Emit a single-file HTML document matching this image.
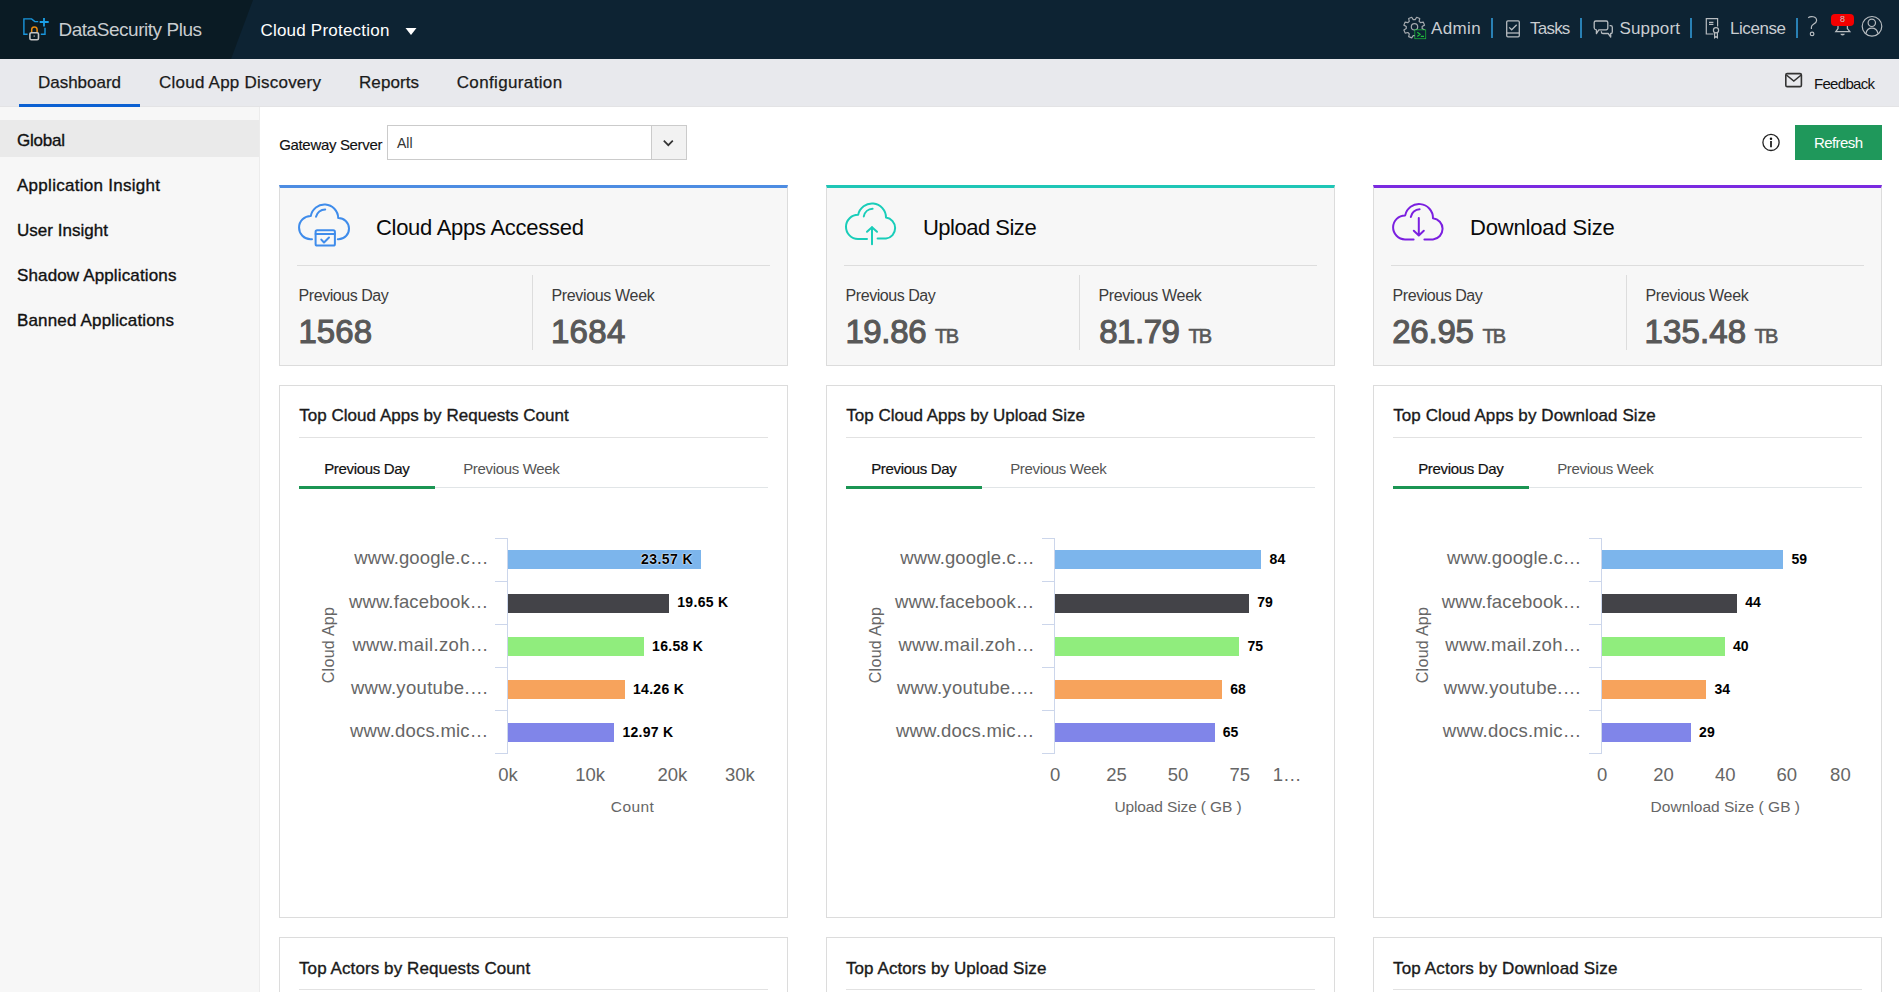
<!DOCTYPE html>
<html><head><meta charset="utf-8"><title>DataSecurity Plus - Cloud Protection</title>
<style>
html,body{margin:0;padding:0;}
body{width:1899px;height:992px;overflow:hidden;position:relative;background:#fff;font-family:"Liberation Sans", sans-serif;}
.a{position:absolute;}
.t{position:absolute;white-space:pre;}
svg{position:absolute;overflow:visible;}
</style></head><body>
<div class='a' style='left:0;top:0;width:1899px;height:59px;background:#0d2333'></div><svg style='left:0;top:0' width='260' height='59'><polygon points='0,0 253,0 231,59 0,59' fill='#0a1b24'/></svg><svg style='left:0;top:0' width='60' height='50' fill='none'>
<path d='M27.6,34.2 H23.9 V18.9 H31.6 L34.8,21.6 H38.2' stroke='#1996dc' stroke-width='1.4'/>
<path d='M40.8,34.2 H45 V27.8' stroke='#1996dc' stroke-width='1.4'/>
<path d='M44,18 V26.6 M39.7,22 H48.7' stroke='#1b9fe6' stroke-width='1.8'/>
<path d='M31.7,33 V29.6 A2.7,2.7 0 0 1 37.1,29.6 V33' stroke='#e98a10' stroke-width='1.5'/>
<rect x='29.9' y='32.7' width='8.6' height='7' rx='1.4' stroke='#c4c4c4' stroke-width='1.6' fill='#0a1b24'/>
<rect x='33.6' y='35.2' width='1.2' height='1.8' fill='#888'/>
</svg><svg style='left:0;top:0' width='1' height='1'><polygon points='405.5,28 416.5,28 411,35' fill='#fff'/></svg><svg style='left:0;top:0' width='1' height='1' fill='none' stroke='#a4a9ae' stroke-width='1.2'><polygon points='1415.20,19.66 1416.67,17.29 1419.74,18.56 1419.10,21.28 1420.52,22.70 1420.52,22.70 1423.24,22.06 1424.51,25.13 1422.14,26.60 1422.14,28.60 1422.14,28.60 1424.51,30.07 1423.24,33.14 1420.52,32.50 1419.10,33.92 1419.10,33.92 1419.74,36.64 1416.67,37.91 1415.20,35.54 1413.20,35.54 1413.20,35.54 1411.73,37.91 1408.66,36.64 1409.30,33.92 1407.88,32.50 1407.88,32.50 1405.16,33.14 1403.89,30.07 1406.26,28.60 1406.26,26.60 1406.26,26.60 1403.89,25.13 1405.16,22.06 1407.88,22.70 1409.30,21.28 1409.30,21.28 1408.66,18.56 1411.73,17.29 1413.20,19.66 1415.20,19.66' stroke-linejoin='round'/><circle cx='1414.5' cy='26.8' r='3.2'/></svg><svg style='left:0;top:0' width='1' height='1' fill='none'>
<rect x='1415.2' y='30.2' width='10.2' height='8.2' stroke='#1fc23a' stroke-width='1.4' fill='#0d2333' style='paint-order:stroke'/>
<path d='M1417.3,32.2 L1420.1,34.3 L1417.3,36.4 M1420.8,36.3 H1424' stroke='#1fc23a' stroke-width='1.2'/>
</svg><div class='a' style='left:1491px;top:18px;width:2px;height:20px;background:#2981b5'></div><div class='a' style='left:1580px;top:18px;width:2px;height:20px;background:#2981b5'></div><div class='a' style='left:1690px;top:18px;width:2px;height:20px;background:#2981b5'></div><div class='a' style='left:1796px;top:18px;width:2px;height:20px;background:#2981b5'></div><svg style='left:0;top:0' width='1' height='1' fill='none' stroke='#b7bcc0' stroke-width='1.3'>
<rect x='1506.7' y='20.9' width='12.6' height='15.9' rx='1.2'/>
<path d='M1506.7,33 H1519.3'/>
<path d='M1509.2,27.4 l2.5,2.4 5,-5' />
</svg><svg style='left:0;top:0' width='1' height='1' fill='none' stroke='#b7bcc0' stroke-width='1.3' stroke-linejoin='round'>
<path d='M1595.8,21 H1606.2 A1.6,1.6 0 0 1 1607.8,22.6 V28.2 A1.6,1.6 0 0 1 1606.2,29.8 H1598.8 L1596.4,33.6 V29.8 A2.2,2.2 0 0 1 1594.2,28 V22.6 A1.6,1.6 0 0 1 1595.8,21 Z'/>
<path d='M1609.6,25.6 H1610.7 A1.6,1.6 0 0 1 1612.3,27.2 V31.9 A1.6,1.6 0 0 1 1610.7,33.5 V37 L1608.2,33.5 H1603 A1.6,1.6 0 0 1 1601.4,31.9 V31.2'/>
</svg><svg style='left:0;top:0' width='1' height='1' fill='none' stroke='#b7bcc0' stroke-width='1.2'>
<path d='M1713.5,34 H1706.3 V18.6 H1717.6 V26.6'/>
<path d='M1709,22.4 h4.4 M1709,24.4 h4.4'/>
<circle cx='1716' cy='30.2' r='2.6'/>
<path d='M1714.6,33 v4.8 l1.4,-1.2 1.4,1.2 v-4.8'/>
</svg><svg style='left:0;top:0' width='1' height='1' fill='none' stroke='#b7bcc0' stroke-width='1.2'>
<path d='M1808.2,17.8 C1810.5,15.8 1816.6,16.2 1816.6,20.4 C1816.6,23.6 1811.4,24.4 1811.4,27 V29'/>
<circle cx='1812.1' cy='33.9' r='1.8'/>
</svg><svg style='left:0;top:0' width='1' height='1' fill='none' stroke='#b7bcc0' stroke-width='1.3'>
<path d='M1838,25.5 V28.6 L1835.8,31.6 H1849.8 L1847.4,28.6 V25.5'/>
<path d='M1840.4,33.8 h4.4 a2.2,1.8 0 0 1 -4.4,0z' fill='#b7bcc0' stroke='none'/>
</svg><div class='a' style='left:1831px;top:14px;width:23px;height:12px;background:#f50000;border-radius:4px'></div><svg style='left:0;top:0' width='1' height='1' fill='none' stroke='#b7bcc0' stroke-width='1.2'>
<circle cx='1872' cy='26.3' r='9.8'/>
<circle cx='1871.8' cy='22.8' r='3.7'/>
<path d='M1866,33.4 C1866.6,29.6 1868.6,28.2 1871.9,28.2 C1875.2,28.2 1877.2,29.6 1877.9,33.4'/>
</svg><div class='a' style='left:0;top:59px;width:1899px;height:47px;background:#e8e9ed'></div><div class='a' style='left:0;top:106px;width:1899px;height:1px;background:#e3e3e5'></div><div class='a' style='left:19px;top:104px;width:121px;height:3px;background:#0b60d2'></div><svg style='left:0;top:0' width='1' height='1' fill='none' stroke='#333' stroke-width='1.6'>
<rect x='1785.8' y='73.6' width='15.6' height='13' rx='1.4'/>
<path d='M1786.4,75 l7.4,6 7.4,-6'/>
</svg><div class='a' style='left:0;top:107px;width:259px;height:885px;background:#f7f7f7'></div><div class='a' style='left:0;top:120px;width:259px;height:37px;background:#eaeaea'></div><div class='a' style='left:259px;top:107px;width:1px;height:885px;background:#ececec'></div><div class='a' style='left:387px;top:125px;width:300px;height:35px;box-sizing:border-box;border:1px solid #cbcbcb;background:#fff'></div><div class='a' style='left:651px;top:126px;width:35px;height:33px;box-sizing:border-box;border-left:1px solid #cbcbcb;background:#f2f2f2'></div><svg style='left:0;top:0' width='1' height='1' fill='none'><polyline points='663.8,140.6 668.3,145.2 672.8,140.6' stroke='#333' stroke-width='1.7'/></svg><svg style='left:0;top:0' width='1' height='1' fill='none' stroke='#222' stroke-width='1.3'>
<circle cx='1771' cy='142.4' r='8.1'/>
<path d='M1771,141 V147.2' stroke-width='1.8'/>
<circle cx='1771' cy='138.8' r='1.25' fill='#111' stroke='none'/>
</svg><div class='a' style='left:1795px;top:125px;width:87px;height:35px;background:#1f985b'></div><div class='a' style='left:279px;top:185px;width:509px;height:181px;box-sizing:border-box;background:#f7f7f7;border:1px solid #dcdcdc;border-top:3px solid #4d8ce2'></div><svg style='left:290px;top:195px' width='70' height='60' fill='none' stroke='#3f8ceb' stroke-width='2' stroke-linecap='round' stroke-linejoin='round'><path d='M22,44.2 H20.5 A11.6,11.6 0 0 1 20.8,21 A13.8,13.8 0 0 1 48.2,23 A10.6,10.6 0 0 1 48.6,44.2 H47.8'/><path d='M26,21.8 A9.4,9.4 0 0 1 35.2,14.5'/><rect x='25.6' y='35.2' width='19.3' height='15.4' rx='1.6'/><path d='M25.6,39 H44.9'/><path d='M31.3,44.6 l2.7,2.9 5,-5'/></svg><div class='a' style='left:297px;top:265px;width:473px;height:1px;background:#dddddd'></div><div class='a' style='left:532px;top:275px;width:1px;height:75px;background:#dddddd'></div><div class='a' style='left:826px;top:185px;width:509px;height:181px;box-sizing:border-box;background:#f7f7f7;border:1px solid #dcdcdc;border-top:3px solid #1fc6b6'></div><svg style='left:837px;top:195px' width='70' height='60' fill='none' stroke='#19cdb9' stroke-width='2' stroke-linecap='round' stroke-linejoin='round'><path d='M30,44 H21 A11.6,11.6 0 0 1 21.2,19.8 A14.03,14.03 0 0 1 49,22.6 A10.6,10.6 0 0 1 49,43.6 H40.6'/><path d='M26.8,21.4 A9.4,9.4 0 0 1 35.6,13.8'/><path d='M35,49.2 V32 M30,36.8 L35,32.2 40,36.8'/></svg><div class='a' style='left:844px;top:265px;width:473px;height:1px;background:#dddddd'></div><div class='a' style='left:1079px;top:275px;width:1px;height:75px;background:#dddddd'></div><div class='a' style='left:1373px;top:185px;width:509px;height:181px;box-sizing:border-box;background:#f7f7f7;border:1px solid #dcdcdc;border-top:3px solid #7a2ae0'></div><svg style='left:1384px;top:195px' width='70' height='60' fill='none' stroke='#7b1fe0' stroke-width='2' stroke-linecap='round' stroke-linejoin='round'><path d='M29.6,44.4 H21 A11.6,11.6 0 0 1 21.2,20.4 A14.03,14.03 0 0 1 49,23.3 A10.6,10.6 0 0 1 49,44.4 H40.4'/><path d='M26.8,22 A9.4,9.4 0 0 1 35.6,14.3'/><path d='M34.8,23 V40.2 M29.8,35.8 L34.8,40.4 39.8,35.8'/></svg><div class='a' style='left:1391px;top:265px;width:473px;height:1px;background:#dddddd'></div><div class='a' style='left:1626px;top:275px;width:1px;height:75px;background:#dddddd'></div><div class='a' style='left:279px;top:385px;width:509px;height:533px;box-sizing:border-box;background:#fff;border:1px solid #dcdcdc'></div><div class='a' style='left:299px;top:437px;width:469px;height:1px;background:#e2e2e2'></div><div class='a' style='left:299px;top:487px;width:469px;height:1px;background:#e1e5e7'></div><div class='a' style='left:299px;top:486px;width:136px;height:3px;background:#1b9553'></div><div class='a' style='left:507px;top:538px;width:1px;height:216px;background:#ccd6eb'></div><div class='a' style='left:495px;top:538px;width:12px;height:1px;background:#ccd6eb'></div><div class='a' style='left:495px;top:581px;width:12px;height:1px;background:#ccd6eb'></div><div class='a' style='left:495px;top:624px;width:12px;height:1px;background:#ccd6eb'></div><div class='a' style='left:495px;top:667px;width:12px;height:1px;background:#ccd6eb'></div><div class='a' style='left:495px;top:710px;width:12px;height:1px;background:#ccd6eb'></div><div class='a' style='left:495px;top:753px;width:12px;height:1px;background:#ccd6eb'></div><div class='a' style='left:508px;top:550px;width:193.2px;height:19.4px;background:#7cb5ec'></div><div class='a' style='left:508px;top:593.5px;width:161.0px;height:19.4px;background:#434348'></div><div class='a' style='left:508px;top:636.8px;width:135.8px;height:19.4px;background:#90ed7d'></div><div class='a' style='left:508px;top:680px;width:116.7px;height:19.4px;background:#f7a35c'></div><div class='a' style='left:508px;top:722.6px;width:106.1px;height:19.4px;background:#8085e9'></div><div class='t' style='left:289.3px;top:637.3px;width:80px;height:16px;line-height:16px;text-align:center;font-size:16px;color:#666;transform:rotate(-90deg);letter-spacing:0.3px'>Cloud App</div><div class='a' style='left:826px;top:385px;width:509px;height:533px;box-sizing:border-box;background:#fff;border:1px solid #dcdcdc'></div><div class='a' style='left:846px;top:437px;width:469px;height:1px;background:#e2e2e2'></div><div class='a' style='left:846px;top:487px;width:469px;height:1px;background:#e1e5e7'></div><div class='a' style='left:846px;top:486px;width:136px;height:3px;background:#1b9553'></div><div class='a' style='left:1054px;top:538px;width:1px;height:216px;background:#ccd6eb'></div><div class='a' style='left:1042px;top:538px;width:12px;height:1px;background:#ccd6eb'></div><div class='a' style='left:1042px;top:581px;width:12px;height:1px;background:#ccd6eb'></div><div class='a' style='left:1042px;top:624px;width:12px;height:1px;background:#ccd6eb'></div><div class='a' style='left:1042px;top:667px;width:12px;height:1px;background:#ccd6eb'></div><div class='a' style='left:1042px;top:710px;width:12px;height:1px;background:#ccd6eb'></div><div class='a' style='left:1042px;top:753px;width:12px;height:1px;background:#ccd6eb'></div><div class='a' style='left:1055px;top:550px;width:206.3px;height:19.4px;background:#7cb5ec'></div><div class='a' style='left:1055px;top:593.5px;width:194.0px;height:19.4px;background:#434348'></div><div class='a' style='left:1055px;top:636.8px;width:184.2px;height:19.4px;background:#90ed7d'></div><div class='a' style='left:1055px;top:680px;width:166.9px;height:19.4px;background:#f7a35c'></div><div class='a' style='left:1055px;top:722.6px;width:159.5px;height:19.4px;background:#8085e9'></div><div class='t' style='left:836.3px;top:637.3px;width:80px;height:16px;line-height:16px;text-align:center;font-size:16px;color:#666;transform:rotate(-90deg);letter-spacing:0.3px'>Cloud App</div><div class='a' style='left:1373px;top:385px;width:509px;height:533px;box-sizing:border-box;background:#fff;border:1px solid #dcdcdc'></div><div class='a' style='left:1393px;top:437px;width:469px;height:1px;background:#e2e2e2'></div><div class='a' style='left:1393px;top:487px;width:469px;height:1px;background:#e1e5e7'></div><div class='a' style='left:1393px;top:486px;width:136px;height:3px;background:#1b9553'></div><div class='a' style='left:1601px;top:538px;width:1px;height:216px;background:#ccd6eb'></div><div class='a' style='left:1589px;top:538px;width:12px;height:1px;background:#ccd6eb'></div><div class='a' style='left:1589px;top:581px;width:12px;height:1px;background:#ccd6eb'></div><div class='a' style='left:1589px;top:624px;width:12px;height:1px;background:#ccd6eb'></div><div class='a' style='left:1589px;top:667px;width:12px;height:1px;background:#ccd6eb'></div><div class='a' style='left:1589px;top:710px;width:12px;height:1px;background:#ccd6eb'></div><div class='a' style='left:1589px;top:753px;width:12px;height:1px;background:#ccd6eb'></div><div class='a' style='left:1602px;top:550px;width:181.2px;height:19.4px;background:#7cb5ec'></div><div class='a' style='left:1602px;top:593.5px;width:135.0px;height:19.4px;background:#434348'></div><div class='a' style='left:1602px;top:636.8px;width:122.7px;height:19.4px;background:#90ed7d'></div><div class='a' style='left:1602px;top:680px;width:104.2px;height:19.4px;background:#f7a35c'></div><div class='a' style='left:1602px;top:722.6px;width:88.8px;height:19.4px;background:#8085e9'></div><div class='t' style='left:1383.3px;top:637.3px;width:80px;height:16px;line-height:16px;text-align:center;font-size:16px;color:#666;transform:rotate(-90deg);letter-spacing:0.3px'>Cloud App</div><div class='a' style='left:279px;top:937px;width:509px;height:80px;box-sizing:border-box;background:#fff;border:1px solid #dcdcdc'></div><div class='a' style='left:299px;top:989px;width:469px;height:1px;background:#e2e2e2'></div><div class='a' style='left:826px;top:937px;width:509px;height:80px;box-sizing:border-box;background:#fff;border:1px solid #dcdcdc'></div><div class='a' style='left:846px;top:989px;width:469px;height:1px;background:#e2e2e2'></div><div class='a' style='left:1373px;top:937px;width:509px;height:80px;box-sizing:border-box;background:#fff;border:1px solid #dcdcdc'></div><div class='a' style='left:1393px;top:989px;width:469px;height:1px;background:#e2e2e2'></div>
<div class='t' style='left:58.4px;top:20.0px;font-size:19px;line-height:19px;color:#c9cdd0;letter-spacing:-0.46px;'>DataSecurity Plus</div><div class='t' style='left:260.4px;top:22.0px;font-size:17px;line-height:17px;color:#ffffff;letter-spacing:0.22px;'>Cloud Protection</div><div class='t' style='left:1431.0px;top:20.0px;font-size:17px;line-height:17px;color:#c9cdd1;letter-spacing:0.38px;'>Admin</div><div class='t' style='left:1530.0px;top:20.0px;font-size:17px;line-height:17px;color:#c9cdd1;letter-spacing:-0.77px;'>Tasks</div><div class='t' style='left:1619.5px;top:20.0px;font-size:17px;line-height:17px;color:#c9cdd1;letter-spacing:0.16px;'>Support</div><div class='t' style='left:1730.0px;top:20.0px;font-size:17px;line-height:17px;color:#c9cdd1;letter-spacing:-0.43px;'>License</div><div class='t' style='left:1840.1px;top:15.0px;font-size:9px;line-height:9px;color:#c8c8c8;'>8</div><div class='t' style='left:38.0px;top:74.0px;font-size:17px;line-height:17px;color:#1b1b1b;letter-spacing:-0.02px;-webkit-text-stroke:0.25px currentColor;'>Dashboard</div><div class='t' style='left:159.0px;top:74.0px;font-size:17px;line-height:17px;color:#1b1b1b;letter-spacing:0.23px;-webkit-text-stroke:0.25px currentColor;'>Cloud App Discovery</div><div class='t' style='left:359.0px;top:74.0px;font-size:17px;line-height:17px;color:#1b1b1b;letter-spacing:0.08px;-webkit-text-stroke:0.25px currentColor;'>Reports</div><div class='t' style='left:456.7px;top:74.0px;font-size:17px;line-height:17px;color:#1b1b1b;letter-spacing:0.36px;-webkit-text-stroke:0.25px currentColor;'>Configuration</div><div class='t' style='left:1814.0px;top:76.0px;font-size:15px;line-height:15px;color:#111;letter-spacing:-0.70px;'>Feedback</div><div class='t' style='left:17.0px;top:132.0px;font-size:17px;line-height:17px;color:#111;letter-spacing:-0.23px;-webkit-text-stroke:0.35px currentColor;'>Global</div><div class='t' style='left:17.0px;top:177.0px;font-size:17px;line-height:17px;color:#111;letter-spacing:0.28px;-webkit-text-stroke:0.35px currentColor;'>Application Insight</div><div class='t' style='left:17.0px;top:221.5px;font-size:17px;line-height:17px;color:#111;letter-spacing:0.03px;-webkit-text-stroke:0.35px currentColor;'>User Insight</div><div class='t' style='left:17.0px;top:267.0px;font-size:17px;line-height:17px;color:#111;letter-spacing:0.14px;-webkit-text-stroke:0.35px currentColor;'>Shadow Applications</div><div class='t' style='left:17.0px;top:312.0px;font-size:17px;line-height:17px;color:#111;letter-spacing:0.16px;-webkit-text-stroke:0.35px currentColor;'>Banned Applications</div><div class='t' style='left:279.2px;top:137.0px;font-size:15px;line-height:15px;color:#111;letter-spacing:-0.33px;-webkit-text-stroke:0.15px currentColor;'>Gateway Server</div><div class='t' style='left:397.0px;top:136.0px;font-size:14px;line-height:14px;color:#333;'>All</div><div class='t' style='left:1814.0px;top:135.0px;font-size:15px;line-height:15px;color:#fff;letter-spacing:-0.59px;'>Refresh</div><div class='t' style='left:375.9px;top:217.0px;font-size:22px;line-height:22px;color:#0a0a0a;letter-spacing:-0.26px;'>Cloud Apps Accessed</div><div class='t' style='left:298.6px;top:288.0px;font-size:16px;line-height:16px;color:#3c3c3c;letter-spacing:-0.45px;'>Previous Day</div><div class='t' style='left:551.4px;top:288.0px;font-size:16px;line-height:16px;color:#3c3c3c;letter-spacing:-0.33px;'>Previous Week</div><div class='t' style='left:298.4px;top:315.0px;font-size:33px;line-height:33px;color:#585858;letter-spacing:0.13px;-webkit-text-stroke:1.1px currentColor;'>1568</div><div class='t' style='left:550.9px;top:315.0px;font-size:33px;line-height:33px;color:#585858;letter-spacing:0.36px;-webkit-text-stroke:1.1px currentColor;'>1684</div><div class='t' style='left:922.9px;top:217.0px;font-size:22px;line-height:22px;color:#0a0a0a;letter-spacing:-0.49px;'>Upload Size</div><div class='t' style='left:845.6px;top:288.0px;font-size:16px;line-height:16px;color:#3c3c3c;letter-spacing:-0.45px;'>Previous Day</div><div class='t' style='left:1098.4px;top:288.0px;font-size:16px;line-height:16px;color:#3c3c3c;letter-spacing:-0.33px;'>Previous Week</div><div class='t' style='left:845.4px;top:315.0px;font-size:33px;line-height:33px;color:#585858;letter-spacing:-0.37px;-webkit-text-stroke:1.1px currentColor;'>19.86</div><div class='t' style='left:935.0px;top:326.0px;font-size:20px;line-height:20px;color:#585858;letter-spacing:-1.36px;-webkit-text-stroke:0.6px currentColor;'>TB</div><div class='t' style='left:1099.2px;top:315.0px;font-size:33px;line-height:33px;color:#585858;letter-spacing:-0.47px;-webkit-text-stroke:1.1px currentColor;'>81.79</div><div class='t' style='left:1188.4px;top:326.0px;font-size:20px;line-height:20px;color:#585858;letter-spacing:-1.76px;-webkit-text-stroke:0.6px currentColor;'>TB</div><div class='t' style='left:1469.9px;top:217.0px;font-size:22px;line-height:22px;color:#0a0a0a;letter-spacing:-0.15px;'>Download Size</div><div class='t' style='left:1392.6px;top:288.0px;font-size:16px;line-height:16px;color:#3c3c3c;letter-spacing:-0.45px;'>Previous Day</div><div class='t' style='left:1645.4px;top:288.0px;font-size:16px;line-height:16px;color:#3c3c3c;letter-spacing:-0.33px;'>Previous Week</div><div class='t' style='left:1392.2px;top:315.0px;font-size:33px;line-height:33px;color:#585858;letter-spacing:-0.22px;-webkit-text-stroke:1.1px currentColor;'>26.95</div><div class='t' style='left:1482.4px;top:326.0px;font-size:20px;line-height:20px;color:#585858;letter-spacing:-1.76px;-webkit-text-stroke:0.6px currentColor;'>TB</div><div class='t' style='left:1644.5px;top:315.0px;font-size:33px;line-height:33px;color:#585858;letter-spacing:0.11px;-webkit-text-stroke:1.1px currentColor;'>135.48</div><div class='t' style='left:1754.5px;top:326.0px;font-size:20px;line-height:20px;color:#585858;letter-spacing:-1.76px;-webkit-text-stroke:0.6px currentColor;'>TB</div><div class='t' style='left:299.2px;top:407.0px;font-size:17px;line-height:17px;color:#1a1a1a;letter-spacing:0.04px;-webkit-text-stroke:0.35px currentColor;'>Top Cloud Apps by Requests Count</div><div class='t' style='left:324.2px;top:461.0px;font-size:15px;line-height:15px;color:#111;letter-spacing:-0.32px;-webkit-text-stroke:0.2px currentColor;'>Previous Day</div><div class='t' style='left:463.2px;top:461.0px;font-size:15px;line-height:15px;color:#555;letter-spacing:-0.33px;'>Previous Week</div><div class='t' style='left:640.9px;top:551.9px;font-size:14px;line-height:14px;color:#000;font-weight:700;letter-spacing:0.46px;text-shadow:0 0 2px #fff,0 0 1px #fff;'>23.57 K</div><div class='t' style='left:354.2px;top:549.3px;font-size:18.5px;line-height:18.5px;color:#666;letter-spacing:0.13px;'>www.google.c…</div><div class='t' style='left:677.3px;top:595.4px;font-size:14px;line-height:14px;color:#000;font-weight:700;letter-spacing:0.29px;text-shadow:0 0 2px #fff,0 0 1px #fff;'>19.65 K</div><div class='t' style='left:348.9px;top:592.8px;font-size:18.5px;line-height:18.5px;color:#666;letter-spacing:0.14px;'>www.facebook…</div><div class='t' style='left:652.1px;top:638.7px;font-size:14px;line-height:14px;color:#000;font-weight:700;letter-spacing:0.29px;text-shadow:0 0 2px #fff,0 0 1px #fff;'>16.58 K</div><div class='t' style='left:352.4px;top:636.1px;font-size:18.5px;line-height:18.5px;color:#666;letter-spacing:0.37px;'>www.mail.zoh…</div><div class='t' style='left:633.0px;top:681.9px;font-size:14px;line-height:14px;color:#000;font-weight:700;letter-spacing:0.29px;text-shadow:0 0 2px #fff,0 0 1px #fff;'>14.26 K</div><div class='t' style='left:350.9px;top:679.3px;font-size:18.5px;line-height:18.5px;color:#666;letter-spacing:0.32px;'>www.youtube.…</div><div class='t' style='left:622.4px;top:724.5px;font-size:14px;line-height:14px;color:#000;font-weight:700;letter-spacing:0.29px;text-shadow:0 0 2px #fff,0 0 1px #fff;'>12.97 K</div><div class='t' style='left:349.9px;top:721.9px;font-size:18.5px;line-height:18.5px;color:#666;letter-spacing:0.23px;'>www.docs.mic…</div><div class='t' style='left:498.2px;top:766.0px;font-size:18.5px;line-height:18.5px;color:#666;'>0k</div><div class='t' style='left:575.3px;top:766.0px;font-size:18.5px;line-height:18.5px;color:#666;'>10k</div><div class='t' style='left:657.5px;top:766.0px;font-size:18.5px;line-height:18.5px;color:#666;'>20k</div><div class='t' style='left:724.9px;top:766.0px;font-size:18.5px;line-height:18.5px;color:#666;'>30k</div><div class='t' style='left:610.8px;top:799.0px;font-size:15.5px;line-height:15.5px;color:#666;letter-spacing:0.41px;'>Count</div><div class='t' style='left:846.2px;top:407.0px;font-size:17px;line-height:17px;color:#1a1a1a;letter-spacing:0.02px;-webkit-text-stroke:0.35px currentColor;'>Top Cloud Apps by Upload Size</div><div class='t' style='left:871.2px;top:461.0px;font-size:15px;line-height:15px;color:#111;letter-spacing:-0.32px;-webkit-text-stroke:0.2px currentColor;'>Previous Day</div><div class='t' style='left:1010.2px;top:461.0px;font-size:15px;line-height:15px;color:#555;letter-spacing:-0.33px;'>Previous Week</div><div class='t' style='left:1269.6px;top:551.9px;font-size:14px;line-height:14px;color:#000;font-weight:700;letter-spacing:0.02px;text-shadow:0 0 2px #fff,0 0 1px #fff;'>84</div><div class='t' style='left:900.2px;top:549.3px;font-size:18.5px;line-height:18.5px;color:#666;letter-spacing:0.13px;'>www.google.c…</div><div class='t' style='left:1257.3px;top:595.4px;font-size:14px;line-height:14px;color:#000;font-weight:700;letter-spacing:0.02px;text-shadow:0 0 2px #fff,0 0 1px #fff;'>79</div><div class='t' style='left:894.9px;top:592.8px;font-size:18.5px;line-height:18.5px;color:#666;letter-spacing:0.14px;'>www.facebook…</div><div class='t' style='left:1247.5px;top:638.7px;font-size:14px;line-height:14px;color:#000;font-weight:700;letter-spacing:0.02px;text-shadow:0 0 2px #fff,0 0 1px #fff;'>75</div><div class='t' style='left:898.4px;top:636.1px;font-size:18.5px;line-height:18.5px;color:#666;letter-spacing:0.37px;'>www.mail.zoh…</div><div class='t' style='left:1230.2px;top:681.9px;font-size:14px;line-height:14px;color:#000;font-weight:700;letter-spacing:0.02px;text-shadow:0 0 2px #fff,0 0 1px #fff;'>68</div><div class='t' style='left:896.9px;top:679.3px;font-size:18.5px;line-height:18.5px;color:#666;letter-spacing:0.32px;'>www.youtube.…</div><div class='t' style='left:1222.8px;top:724.5px;font-size:14px;line-height:14px;color:#000;font-weight:700;letter-spacing:0.02px;text-shadow:0 0 2px #fff,0 0 1px #fff;'>65</div><div class='t' style='left:895.9px;top:721.9px;font-size:18.5px;line-height:18.5px;color:#666;letter-spacing:0.23px;'>www.docs.mic…</div><div class='t' style='left:1049.9px;top:766.0px;font-size:18.5px;line-height:18.5px;color:#666;'>0</div><div class='t' style='left:1106.3px;top:766.0px;font-size:18.5px;line-height:18.5px;color:#666;'>25</div><div class='t' style='left:1167.8px;top:766.0px;font-size:18.5px;line-height:18.5px;color:#666;'>50</div><div class='t' style='left:1229.4px;top:766.0px;font-size:18.5px;line-height:18.5px;color:#666;'>75</div><div class='t' style='left:1272.8px;top:766.0px;font-size:18.5px;line-height:18.5px;color:#666;'>1…</div><div class='t' style='left:1114.4px;top:799.0px;font-size:15.5px;line-height:15.5px;color:#666;letter-spacing:-0.12px;'>Upload Size ( GB )</div><div class='t' style='left:1393.2px;top:407.0px;font-size:17px;line-height:17px;color:#1a1a1a;letter-spacing:0.09px;-webkit-text-stroke:0.35px currentColor;'>Top Cloud Apps by Download Size</div><div class='t' style='left:1418.2px;top:461.0px;font-size:15px;line-height:15px;color:#111;letter-spacing:-0.32px;-webkit-text-stroke:0.2px currentColor;'>Previous Day</div><div class='t' style='left:1557.2px;top:461.0px;font-size:15px;line-height:15px;color:#555;letter-spacing:-0.33px;'>Previous Week</div><div class='t' style='left:1791.5px;top:551.9px;font-size:14px;line-height:14px;color:#000;font-weight:700;letter-spacing:0.02px;text-shadow:0 0 2px #fff,0 0 1px #fff;'>59</div><div class='t' style='left:1447.1px;top:549.3px;font-size:18.5px;line-height:18.5px;color:#666;letter-spacing:0.13px;'>www.google.c…</div><div class='t' style='left:1745.3px;top:595.4px;font-size:14px;line-height:14px;color:#000;font-weight:700;letter-spacing:0.02px;text-shadow:0 0 2px #fff,0 0 1px #fff;'>44</div><div class='t' style='left:1441.8px;top:592.8px;font-size:18.5px;line-height:18.5px;color:#666;letter-spacing:0.14px;'>www.facebook…</div><div class='t' style='left:1733.0px;top:638.7px;font-size:14px;line-height:14px;color:#000;font-weight:700;letter-spacing:0.02px;text-shadow:0 0 2px #fff,0 0 1px #fff;'>40</div><div class='t' style='left:1445.3px;top:636.1px;font-size:18.5px;line-height:18.5px;color:#666;letter-spacing:0.37px;'>www.mail.zoh…</div><div class='t' style='left:1714.5px;top:681.9px;font-size:14px;line-height:14px;color:#000;font-weight:700;letter-spacing:0.02px;text-shadow:0 0 2px #fff,0 0 1px #fff;'>34</div><div class='t' style='left:1443.8px;top:679.3px;font-size:18.5px;line-height:18.5px;color:#666;letter-spacing:0.32px;'>www.youtube.…</div><div class='t' style='left:1699.1px;top:724.5px;font-size:14px;line-height:14px;color:#000;font-weight:700;letter-spacing:0.02px;text-shadow:0 0 2px #fff,0 0 1px #fff;'>29</div><div class='t' style='left:1442.8px;top:721.9px;font-size:18.5px;line-height:18.5px;color:#666;letter-spacing:0.23px;'>www.docs.mic…</div><div class='t' style='left:1596.9px;top:766.0px;font-size:18.5px;line-height:18.5px;color:#666;'>0</div><div class='t' style='left:1653.3px;top:766.0px;font-size:18.5px;line-height:18.5px;color:#666;'>20</div><div class='t' style='left:1714.9px;top:766.0px;font-size:18.5px;line-height:18.5px;color:#666;'>40</div><div class='t' style='left:1776.5px;top:766.0px;font-size:18.5px;line-height:18.5px;color:#666;'>60</div><div class='t' style='left:1830.1px;top:766.0px;font-size:18.5px;line-height:18.5px;color:#666;'>80</div><div class='t' style='left:1650.6px;top:799.0px;font-size:15.5px;line-height:15.5px;color:#666;letter-spacing:0.02px;'>Download Size ( GB )</div><div class='t' style='left:299.0px;top:960.0px;font-size:17px;line-height:17px;color:#1a1a1a;letter-spacing:0.09px;-webkit-text-stroke:0.35px currentColor;'>Top Actors by Requests Count</div><div class='t' style='left:846.0px;top:960.0px;font-size:17px;line-height:17px;color:#1a1a1a;letter-spacing:0.08px;-webkit-text-stroke:0.35px currentColor;'>Top Actors by Upload Size</div><div class='t' style='left:1393.0px;top:960.0px;font-size:17px;line-height:17px;color:#1a1a1a;letter-spacing:0.16px;-webkit-text-stroke:0.35px currentColor;'>Top Actors by Download Size</div>
</body></html>
